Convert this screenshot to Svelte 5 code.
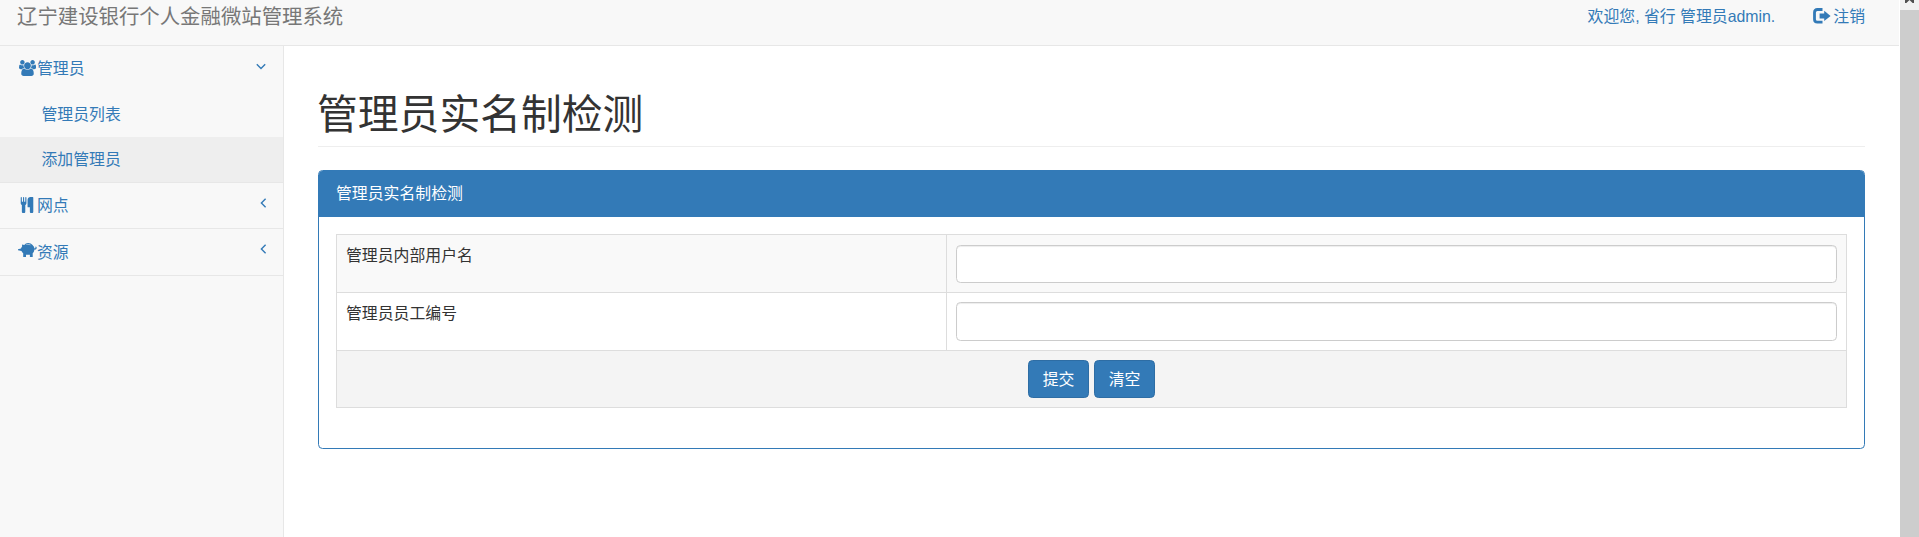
<script>
  const children = [
    { label: '管理员列表', active: false },
    { label: '添加管理员', active: true }
  ];
  const fields = ['管理员内部用户名', '管理员员工编号'];
</script>

<div class="page">
  <div class="wrapper">
    <nav class="navbar">
      <a class="brand" href="#top">辽宁建设银行个人金融微站管理系统</a>
      <div class="links">
        <a href="#user">欢迎您, 省行 管理员admin.</a>
        <a class="logout" href="#logout">
          <svg width="18" height="16" viewBox="0 0 18 16"><path d="M9.5 1.5H4.4Q1.5 1.5 1.5 4.4V11.2Q1.5 14.1 4.4 14.1H9.5" fill="none" stroke="currentColor" stroke-width="2.8" /><path d="M11.2 2.8 17.6 7.9 11.2 13V10.4H6.6V5.4H11.2Z" fill="currentColor" /></svg><span>注销</span>
        </a>
      </div>
    </nav>
    <div class="body">
      <aside>
        <div class="group first">
          <a class="item" href="#admin">
            <span class="ico"><svg width="17" height="16" viewBox="0 0 1920 1792"><path fill="currentColor" d="M593 896q-162 5-265 128h-134q-82 0-138-40.5t-56-118.5q0-353 124-353 6 0 43.5 21t97.5 42.5 119 21.5q67 0 133-23-5 37-5 66 0 159 93 256zm1071 637q0 120-73 189.5t-194 69.5h-874q-121 0-194-69.5t-73-189.5q0-53 3.5-103.5t14-109 26.5-108.5 43-97.5 62-81 85.5-53.5 111.5-20q10 0 43 21.5t73 48 107 48 135 21.5 135-21.5 107-48 73-48 43-21.5q61 0 111.5 20t85.5 53.5 62 81 43 97.5 26.5 108.5 14 109 3.5 103.5zm-1024-1277q0 106-75 181t-181 75-181-75-75-181 75-181 181-75 181 75 75 181zm704 384q0 159-112.5 271.5t-271.5 112.5-271.5-112.5-112.5-271.5 112.5-271.5 271.5-112.5 271.5 112.5 112.5 271.5zm576 225q0 78-56 118.5t-138 40.5h-134q-103-123-265-128 93-97 93-256 0-29-5-66 66 23 133 23 59 0 119-21.5t97.5-42.5 43.5-21q124 0 124 353zm-128-609q0 106-75 181t-181 75-181-75-75-181 75-181 181-75 181 75 75 181z" /></svg></span>
            <span class="label">管理员</span>
            <svg class="arrow" width="10" height="7" viewBox="0 0 10 7"><path d="M.8 1.2 5 5.4 9.2 1.2" fill="none" stroke="currentColor" stroke-width="1.4" /></svg>
          </a>
          {#each children as c}
            <a class="child" class:active={c.active} href="#sub">{c.label}</a>
          {/each}
        </div>
        <div class="group">
          <a class="item" href="#branch">
            <span class="ico"><svg width="14" height="16" viewBox="128 0 1536 1792"><path fill="currentColor" d="M832 64v640q0 61-35.5 111t-92.5 70v779q0 52-38 90t-90 38h-128q-52 0-90-38t-38-90v-779q-57-20-92.5-70t-35.5-111v-640q0-26 19-45t45-19 45 19 19 45v416q0 26 19 45t45 19 45-19 19-45v-416q0-26 19-45t45-19 45 19 19 45v416q0 26 19 45t45 19 45-19 19-45v-416q0-26 19-45t45-19 45 19 19 45zm768 0v1600q0 52-38 90t-90 38h-128q-52 0-90-38t-38-90v-512h-224q-13 0-22.5-9.5t-9.5-22.5v-800q0-132 94-226t226-94h256q26 0 45 19t19 45z" /></svg></span>
            <span class="label">网点</span>
            <svg class="arrow left" width="7" height="10" viewBox="0 0 7 10"><path d="M5.6 .8 1.4 5 5.6 9.2" fill="none" stroke="currentColor" stroke-width="1.4" /></svg>
          </a>
        </div>
        <div class="group last">
          <a class="item" href="#res">
            <span class="ico"><svg class="pig" width="19" height="15" viewBox="0 0 19 15"><path fill="currentColor" fill-rule="evenodd" d="M4 1.4 6.2 2Q7.6.2 10.2.1Q13 .2 14.3 1.8Q16.2 3.2 16.5 5.6Q17.6 5.6 17.5 4.4Q17.2 3.6 17.8 3.5Q19 4.2 18.6 5.4Q18.1 6.6 16.5 6.6Q16.2 8.8 14.7 10.2V14H11.9V11.7Q10 12 8 11.7V14H5.2V10.3Q4 9.3 3.5 8.1L0 7.2V6.2L3 5.6Q3.3 4.5 4.1 3.6ZM7.9 2.1Q10.2 1.2 12.5 2.2L12.6 1.8Q10.2.8 7.7 1.7Z" /></svg></span>
            <span class="label">资源</span>
            <svg class="arrow left" width="7" height="10" viewBox="0 0 7 10"><path d="M5.6 .8 1.4 5 5.6 9.2" fill="none" stroke="currentColor" stroke-width="1.4" /></svg>
          </a>
        </div>
      </aside>
      <main>
        <h1>管理员实名制检测</h1>
        <section class="panel">
          <header>管理员实名制检测</header>
          <form class="table">
            {#each fields as f, i}
              <div class="row" class:odd={i % 2 === 0}>
                <div class="name">{f}</div>
                <div class="value"><input class:tall={i === 1} type="text" aria-label={f} /></div>
              </div>
            {/each}
            <div class="actions">
              <button type="button">提交</button>
              <button type="reset">清空</button>
            </div>
          </form>
        </section>
      </main>
    </div>
  </div>
  <div class="scroll">
    <div class="up"><svg width="11" height="10" viewBox="0 0 11 10"><path d="M1 0H4L5.5 -1 7 0H10V3H8.6L5.5 0 2.4 3H1Z" fill="#505050" /></svg></div>
    <div class="thumb"></div>
  </div>
</div>

<style>
  :global(body) { margin: 0; overflow: hidden; }
  .page, .page * { box-sizing: border-box; }
  .page {
    display: flex;
    height: 537px;
    font: 15.87px/22px "Liberation Sans", "Noto Sans CJK SC", sans-serif;
    color: #333;
    background: #fff;
  }
  a { color: #337ab7; text-decoration: none; }
  svg { display: block; flex: none; }
  .wrapper { flex: 1; display: flex; flex-direction: column; min-width: 0; }
  .navbar {
    height: 46px;
    flex: none;
    display: flex;
    justify-content: space-between;
    background: #f8f8f8;
    border-bottom: 1px solid #e7e7e7;
    padding: 6px 34px 0 17px;
    margin-right: 1px;
  }
  .brand { color: #777; font-size: 20.4px; line-height: 23px; }
  .links { display: flex; gap: 38px; line-height: 22px; }
  .links a { white-space: nowrap; }
  .logout { display: flex; gap: 2px; }
  .logout svg { margin-top: 2px; }
  .body { flex: 1; display: flex; min-height: 0; }
  aside { width: 284px; flex: none; background: #f8f8f8; border-right: 1px solid #e7e7e7; }
  .group { border-bottom: 1px solid #e7e7e7; }
  .item { display: flex; height: 45px; padding: 12px 16px 0 17px; }
  .last .item { height: 46px; padding-top: 13px; }
  .ico { width: 20px; display: flex; justify-content: center; padding-top: 2px; }
  .pig { margin-top: -1px; }
  .label { flex: 1; }
  .arrow { margin-top: 5px; }
  .first .arrow { margin-right: 1px; }
  .arrow.left { margin-top: 3px; }
  .last .arrow.left { margin-top: 2px; }
  .child { display: block; height: 46px; line-height: 22px; padding: 13px 0 0 41.5px; }
  .child.active { height: 45px; background: #eee; padding-top: 12px; }
  main { flex: 1; padding: 0 35px 0 34px; min-width: 0; }
  h1 {
    margin: 0 0 23px;
    height: 101px;
    padding-top: 46px;
    font-size: 40.8px;
    line-height: 46px;
    font-weight: 400;
    text-indent: -1px;
    border-bottom: 1px solid #eee;
  }
  .panel { height: 279px; border: 1px solid #337ab7; border-radius: 4.5px; overflow: hidden; }
  header { height: 46px; padding: 12px 17px 0; background: #337ab7; color: #fff; }
  .table { margin: 17px 17px 0; border: 1px solid #ddd; }
  .row { display: grid; grid-template-columns: 610px 1fr; height: 58px; border-bottom: 1px solid #ddd; }
  .odd { background: #f9f9f9; }
  .name { padding: 10px 9px; border-right: 1px solid #ddd; }
  .value { padding: 9px 9px 0; }
  .odd .value { padding-top: 10px; }
  input {
    display: block;
    width: 100%;
    height: 38px;
    border: 1px solid #ccc;
    border-radius: 4.5px;
    background: #fff;
    box-shadow: inset 0 1px 1px rgba(0, 0, 0, .075);
    outline: none;
  }
  input.tall { height: 39px; }
  .actions { height: 56px; display: flex; justify-content: center; gap: 5px; padding-top: 9px; background: #f4f4f4; }
  button {
    width: 61px;
    height: 38px;
    padding: 1px 0 0;
    font: inherit;
    color: #fff;
    background: #337ab7;
    border: 1px solid #2e6da4;
    border-radius: 4.5px;
  }
  .scroll { width: 19px; background: #f1f1f1; }
  .up { height: 10px; padding-left: 4px; }
  .thumb { height: 527px; background: #cdcdcd; }
</style>
